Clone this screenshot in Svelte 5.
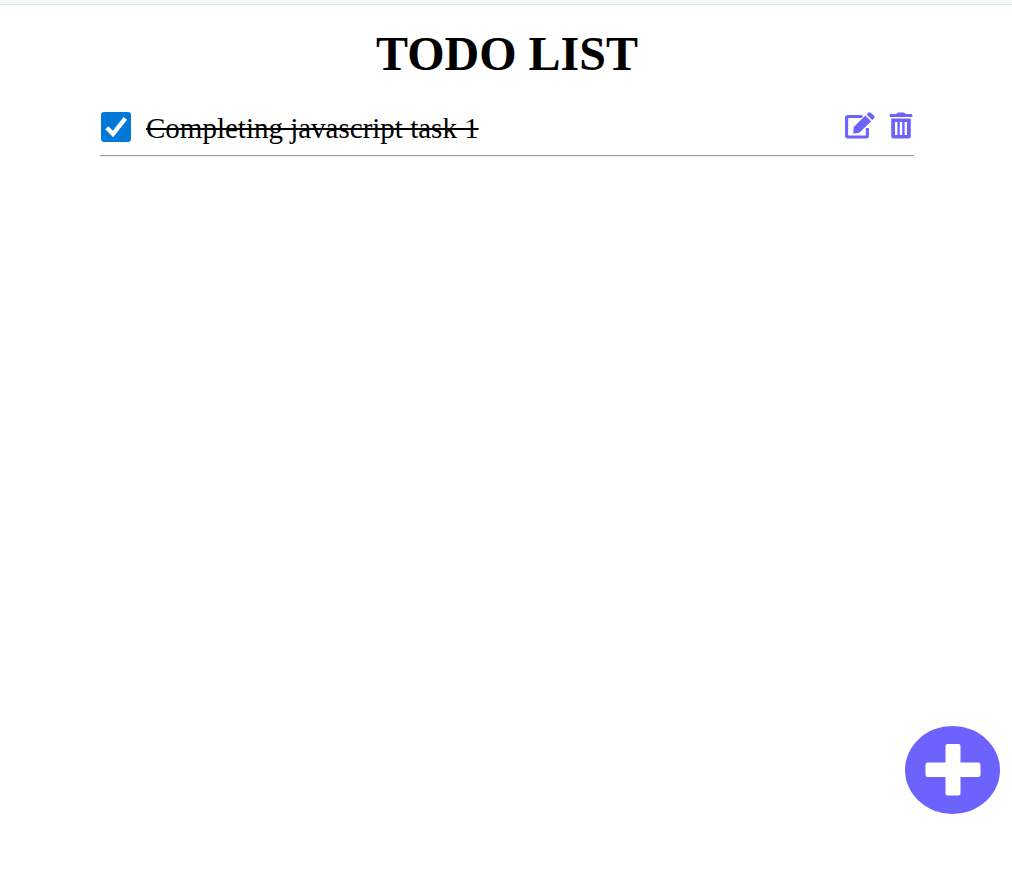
<script>
  let tasks = $state([{ id: 1, text: 'Completing javascript task 1', done: true }]);

  function remove(id) {
    tasks = tasks.filter((t) => t.id !== id);
  }
</script>

<div class="page">
  <div class="strip"></div>
  <main>
    <h1>TODO LIST</h1>
    <ul>
      {#each tasks as task (task.id)}
        <li>
          <span class="check">
            <input id="task-{task.id}" type="checkbox" bind:checked={task.done} />
            <svg viewBox="0 0 30 30" aria-hidden="true">
              <path d="M5.8 15.8 L12 22 L24.3 6.3" fill="none" stroke="#fff" stroke-width="4.4" />
            </svg>
          </span>
          <label for="task-{task.id}" class:done={task.done}>{task.text}</label>
          <button class="icon" aria-label="Edit task">
            <svg width="30" height="28" viewBox="0 0 30 28" aria-hidden="true">
              <path
                d="M17.5 4.5H2.8Q1.6 4.5 1.6 5.7V23.8Q1.6 25 2.8 25H21.2Q22.4 25 22.4 23.8V16"
                fill="none"
                stroke="currentColor"
                stroke-width="3.1"
              />
              <path
                d="M20.3 3.4 L26.2 9.2 L14.3 20.8 L9.2 21.6 Q8 21.7 8.2 20.5 L8.8 14.9 Z"
                fill="currentColor"
                stroke="#fff"
                stroke-width="1.4"
                paint-order="stroke"
              />
              <path
                d="M21.5 2.4 L23.2 .8 Q24.5 -.2 25.9 .8 L29 3.8 Q30 5 29 6.3 L27.2 8 Z"
                fill="currentColor"
              />
            </svg>
          </button>
          <button class="icon trash" aria-label="Delete task" onclick={() => remove(task.id)}>
            <svg width="24" height="28" viewBox="0 0 24 28" aria-hidden="true">
              <path
                d="M7.5 2 L8.4 .9 Q8.7 .5 9.3 .5 H14.7 Q15.3 .5 15.6 .9 L16.5 2 H22.5 Q23.3 2 23.3 2.8 V5 H.7 V2.8 Q.7 2 1.5 2 Z"
                fill="currentColor"
              />
              <path
                fill-rule="evenodd"
                d="M2.2 6.5 H21.8 V24.2 Q21.8 26.5 19.5 26.5 H4.5 Q2.2 26.5 2.2 24.2 Z M6 10 V23 H8.4 V10 Z M10.8 10 V23 H13.2 V10 Z M15.6 10 V23 H18 V10 Z"
                fill="currentColor"
              />
            </svg>
          </button>
        </li>
      {/each}
    </ul>
  </main>
  <button class="add" aria-label="Add task">
    <svg width="56" height="52" viewBox="0 0 56 52" aria-hidden="true">
      <path
        d="M22.5 0H33.5Q35.5 0 35.5 2V18.5H53.5Q55.5 18.5 55.5 21V30.5Q55.5 33 53.5 33H35.5V49.5Q35.5 51.5 33.5 51.5H22.5Q20.5 51.5 20.5 49.5V33H2.5Q.5 33 .5 30.5V21Q.5 18.5 2.5 18.5H20.5V2Q20.5 0 22.5 0Z"
        fill="#fff"
      />
    </svg>
  </button>
</div>

<style>
  .page {
    min-height: 100vh;
    background: #fff;
    color: #000;
    font-family: 'Liberation Serif', 'Times New Roman', serif;
  }

  .strip {
    height: 4px;
    background: #f4f9f8;
    border-bottom: 1px solid #d5e4e0;
  }

  main {
    padding: 21px 98px 0 100px;
  }

  h1 {
    margin: 0;
    font-size: 48px;
    line-height: 56px;
    text-align: center;
  }

  ul {
    list-style: none;
    margin: 0;
    padding: 20px 0 0;
  }

  li {
    display: flex;
    align-items: center;
    height: 50px;
    padding-bottom: 3px;
    border-bottom: 1px solid #9a9a9a;
    box-shadow: 0 1px #eee;
  }

  .check {
    display: grid;
    width: 30px;
    height: 30px;
    margin: 0 15px 0 1px;
  }

  .check input,
  .check svg {
    grid-area: 1 / 1;
    width: 30px;
    height: 30px;
    margin: 0;
  }

  .check input {
    appearance: none;
    box-sizing: border-box;
    border: 2px solid #767676;
    border-radius: 3px;
    background: #fff;
  }

  .check input:checked {
    border-color: #0078d7;
    background: #0078d7;
  }

  .check svg {
    pointer-events: none;
  }

  label {
    flex: 1;
    padding-top: 2px;
    font-size: 29px;
    line-height: 32px;
  }

  .done {
    text-decoration: line-through;
    text-decoration-thickness: 2px;
  }

  button {
    border: 0;
    padding: 0;
    cursor: pointer;
  }

  .icon {
    display: flex;
    margin-bottom: 2px;
    background: none;
    color: #6c63ff;
  }

  .trash {
    margin: 0 1px 2px 14px;
  }

  .add {
    position: fixed;
    right: 12px;
    bottom: 59px;
    display: flex;
    align-items: center;
    justify-content: center;
    width: 95px;
    height: 88px;
    border-radius: 50%;
    background: #6c63ff;
  }
</style>
